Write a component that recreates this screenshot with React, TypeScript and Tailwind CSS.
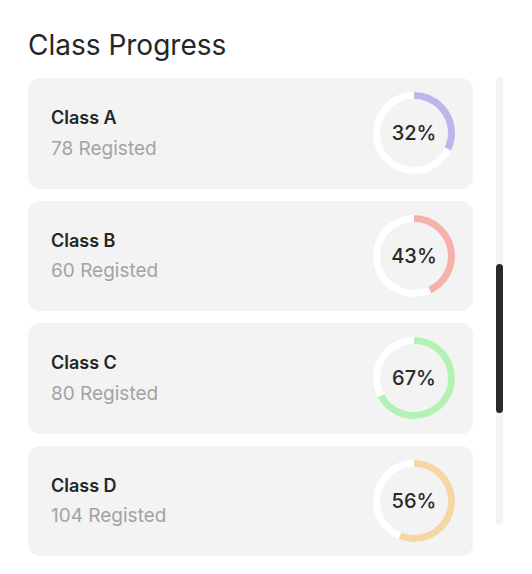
const classes = [
  { name: "Class A", registered: 78, percent: 32, color: "#bbb6ec" },
  { name: "Class B", registered: 60, percent: 43, color: "#f4b2ab" },
  { name: "Class C", registered: 80, percent: 67, color: "#b3f1b4" },
  { name: "Class D", registered: 104, percent: 56, color: "#f5d6a5" },
];

function Donut({ percent, color }: { percent: number; color: string }) {
  const r = 37.5;
  const c = 2 * Math.PI * r;
  return (
    <div className="relative w-[82px] h-[82px] shrink-0">
      <svg width="82" height="82" viewBox="0 0 82 82" className="-rotate-90">
        <circle cx="41" cy="41" r={r} fill="none" stroke="#ffffff" strokeWidth="7" />
        <circle
          cx="41"
          cy="41"
          r={r}
          fill="none"
          stroke={color}
          strokeWidth="7"
          strokeDasharray={`${(c * percent) / 100} ${c}`}
        />
      </svg>
      <span className="absolute inset-0 flex items-center justify-center text-[20px] font-medium text-[#2a2a2a]">
        {percent}%
      </span>
    </div>
  );
}

export default function App() {
  return (
    <div className="w-[532px] h-[574px] bg-white px-[28px] pt-[28px] font-['Inter',sans-serif] overflow-hidden">
      <h2 className="text-[28px] leading-[34px] text-[#262626]">Class Progress</h2>

      <div className="flex mt-[15px] gap-[23px]">
        {/* Cards */}
        <div className="flex flex-col gap-[12px] w-[445px] pt-[1px]">
          {classes.map((item) => (
            <div
              key={item.name}
              className="h-[110.5px] rounded-[12px] bg-[#f3f3f3] flex items-center justify-between pl-[23px] pr-[18px]"
            >
              <div className="flex flex-col gap-[6.5px]">
                <p className="text-[18px] leading-6 font-semibold text-[#262626]">{item.name}</p>
                <p className="text-[19px] leading-6 text-[#a3a3a3]">{item.registered} Registed</p>
              </div>
              <Donut percent={item.percent} color={item.color} />
            </div>
          ))}
        </div>

        {/* Scrollbar */}
        <div className="w-[7px] h-[448px] rounded-full bg-[#f3f3f3] flex flex-col">
          <div className="mt-[187px] h-[149px] rounded-full bg-[#2a2a2a]" />
        </div>
      </div>
    </div>
  );
}
